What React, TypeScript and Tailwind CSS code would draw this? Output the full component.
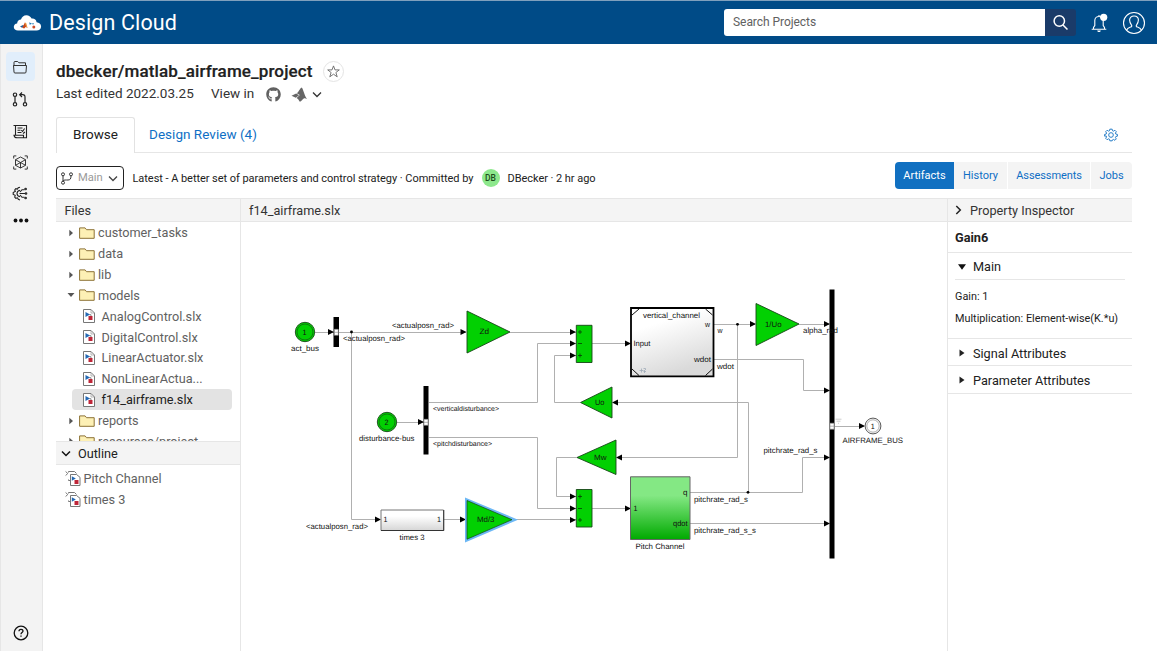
import React from "react";
import { FaGithub } from "react-icons/fa";

const CHEVRON_DOWN = "M1 1.5 5 5.5 9 1.5";

function Chevron({ className }: { className?: string }) {
  return (
    <svg className={className} width="10" height="7" viewBox="0 0 10 7" fill="none" stroke="currentColor" strokeWidth="1.3">
      <path d={CHEVRON_DOWN} />
    </svg>
  );
}

function Header() {
  return (
    <header className="flex h-[44px] shrink-0 items-center border-t border-[#7fa0bd] bg-[#004b87] pl-[13px] pr-[11px] text-white">
      <svg width="29" height="18" viewBox="0 0 29 18" className="mr-[7px]">
        <path d="M5 16.5C2.6 16.5.8 15 .8 13s1.400-3.300 3.300-3.500C4.300 7 6 5.600 8 5.500 8.800 3 10.800 1.300 13.400 1.300c2.400 0 4.300 1.300 5.200 3.300 2.500-.4 4.600 1 5 3.600 2.500.2 4.500 1.800 4.500 4.200 0 2.500-2 4.100-4.600 4.100z" fill="#fff" />
        <path d="m7 12.500 3-1.500 1.500 1.200L9 13.700z" fill="#23629b" />
        <path d="m9.300 13.700 2.600-5.300 1 .8 1.600 4.600-1.800-.8-1.500 1.500z" fill="#c9471c" />
        <path d="m11.900 8.400 1 .8 1.600 4.600-1.500-1z" fill="#f1a33a" />
        <path d="m16.200 8.300 2.800 1.500-2.300 1z" fill="#1c78b8" />
        <circle cx="20" cy="9.800" r=".8" fill="#2b83b8" />
        <circle cx="20.800" cy="13" r="1.500" fill="#cd4b27" />
      </svg>
      <span className="text-[21.500px] leading-none tracking-[0.12px]">Design Cloud</span>
      <div className="ml-auto flex h-[27px] w-[352px] overflow-hidden rounded-[3px]">
        <div className="flex flex-1 items-center bg-white pb-px pl-[9px] text-[12px] text-[#616161]">
          <span className="tracking-[-0.05px]">Search Projects</span>
        </div>
        <div className="flex w-[31px] items-center justify-center bg-[#1a3b69]">
          <svg width="17" height="17" viewBox="0 0 17 17" fill="none" stroke="#fff" strokeWidth="1.5">
            <circle cx="7.300" cy="7" r="5.200" />
            <path d="m11 11 4.500 4.500" />
          </svg>
        </div>
      </div>
      <svg className="ml-[15px]" width="17" height="20" viewBox="0 0 17 20" fill="none" stroke="#fff" strokeWidth="1.100">
        <path d="M.7 16.200h14.600M2.500 16V14.500l1.300-2V7.500c0-2.500 1.700-4 4.200-4s4.200 1.500 4.200 4v5l1.300 2V16M8 3.500V2" />
        <path d="M6.200 17.500h3.600c-.2 1-.9 1.500-1.800 1.500s-1.600-.5-1.800-1.500z" fill="#fff" stroke="none" />
        <circle cx="12.700" cy="4.300" r="3.600" fill="#fff" stroke="none" />
      </svg>
      <svg className="ml-[14px]" width="24" height="24" viewBox="0 0 24 24" fill="none" stroke="#fff" strokeWidth="1.100">
        <circle cx="12" cy="12" r="10.500" />
        <path d="M4.500 19.200c1-2.300 2.500-2.600 4.500-3.300.9-.3 1-1 .5-1.800-1.100-1.400-1.900-3-1.900-5 0-2.600 1.900-4.100 4.400-4.100s4.400 1.500 4.400 4.100c0 2-.8 3.600-1.900 5-.5.8-.4 1.500.5 1.800 2 .7 3.500 1 4.500 3.300" />
      </svg>
    </header>
  );
}

function Sidebar() {
  return (
    <nav className="flex w-[43px] shrink-0 flex-col items-center border-x border-[#e6e6e6] bg-[#f3f3f3] pr-[3px] pt-[8px] text-[#222]">
      <div className="flex h-[29px] w-[29px] items-center justify-center rounded-[4px] bg-[#e1eefb]">
        <svg className="mt-px" width="14" height="13" viewBox="0 0 14 13" fill="none" stroke="#333" strokeWidth="1">
          <path d="M1 5V1.500q0-1 1-1h2.700l1.200 1.300h6.600V5M.5 4.500h13l-.5 6.500q0 1-1 1H2q-1 0-1-1z" />
        </svg>
      </div>
      <svg className="mt-[11px]" width="16" height="15" viewBox="0 0 16 15" fill="none" stroke="currentColor" strokeWidth="1.200">
        <circle cx="3" cy="2.700" r="1.700" />
        <circle cx="3" cy="12.300" r="1.700" />
        <circle cx="13" cy="12.300" r="1.700" />
        <path d="M3 4.500v6M13 10.500V5q0-2.300-2.300-2.300H8M10 .5 7.700 2.700 10 5" />
      </svg>
      <svg className="mt-[17px]" width="15" height="15" viewBox="0 0 15 15" fill="none" stroke="currentColor" strokeWidth="1.100">
        <path d="M.5 1.500h13v12.300H4q-2.500 0-3-2.500h9.500v2M2.500 1.500v9.800M4.500 4h5M4.500 6.200h3M4.500 8.500h4M8.300 6.200l1.300 1.300 2-3M10 9.500l2-1.500" />
      </svg>
      <svg className="mt-[16px]" width="15" height="15" viewBox="0 0 15 15" fill="none" stroke="currentColor" strokeWidth=".9">
        <path d="m7.500 2 5 2.700v5.600l-5 2.700-5-2.700V4.700zM2.500 4.700l5 2.800 5-2.800M7.500 7.500V13M2.500 10.300l5-2.800 5 2.800" />
        <path d="M.7 3.500V.9h2.600M11.700.9h2.600v2.600M.7 11.500v2.600h2.600M11.700 14.100h2.600v-2.600" />
      </svg>
      <svg className="mt-[16px]" width="16" height="15" viewBox="0 0 16 15" fill="none" stroke="currentColor" strokeWidth="1.100">
        <path d="M8 1.200 6.200 1.800 5.500 3 3.800 2.600 2.700 4l.7 1.300L1.200 6.500v2l2 .8L2.700 11l1.200 1.300 1.600-.5.8 1.500 1.700.6M8 4.300C6.200 4.700 5 5.800 5 7.500s1.200 2.800 3 3.200" />
        <path d="M7.500 7.500H13M8 6l2-2.300h2.500M8 9l2 2.300h2.500" />
        <circle cx="14" cy="7.500" r=".8" />
        <circle cx="13.600" cy="3" r=".8" />
        <circle cx="13.600" cy="12" r=".8" />
      </svg>
      <svg className="mt-[17px] ml-[2px]" width="16" height="5" viewBox="0 0 16 5" fill="#111">
        <circle cx="2.500" cy="2.500" r="1.900" />
        <circle cx="8" cy="2.500" r="1.900" />
        <circle cx="13.500" cy="2.500" r="1.900" />
      </svg>
      <svg className="mt-auto mb-[10px] ml-[2px]" width="16" height="16" viewBox="0 0 16 16" fill="none" stroke="#111" strokeWidth="1.300">
        <circle cx="8" cy="8" r="6.800" />
        <path d="M6 6.300c0-1.200.8-2 2-2s2 .7 2 1.800c0 1.500-2 1.500-2 3.100M8 10.400v1.400" />
      </svg>
    </nav>
  );
}

function TitleBlock() {
  return (
    <div className="flex h-[73px] flex-col pl-[13px] pt-[16px]">
      <div className="flex h-[22px] items-center">
        <h1 className="w-[257px] whitespace-nowrap text-[17px] font-medium leading-none text-[#212121] tracking-[0.12px] [-webkit-text-stroke:0.200px_#212121]">dbecker/matlab_airframe_project</h1>
        <span className="ml-[10px] flex h-[21px] w-[21px] items-center justify-center rounded-full border border-[#e4e4e4]">
          <svg width="13" height="13" viewBox="0 0 13 13" fill="none" stroke="#666" strokeWidth=".9">
            <path d="m6.500.9 1.500 4h4.300L8.900 7.500l1.300 4.300-3.700-2.600-3.700 2.600 1.300-4.300L.7 4.900H5z" />
          </svg>
        </span>
      </div>
      <div className="flex h-[24px] items-center text-[13.500px] text-[#333]">
        <span className="w-[155px] whitespace-nowrap pb-[2px]">Last edited 2022.03.25</span>
        <span className="w-[55px] whitespace-nowrap pb-[2px]">View in</span>
        <FaGithub size={15} color="#616161" />
        <svg className="ml-[10px]" width="17" height="15" viewBox="0 0 17 15" fill="#666">
          <path d="m.5 8.800 4.700-2.300 2.800 1.700-3.200 2.600z" fill="#666" />
          <path d="M5.800 6.200C7.600 5.500 8.800 1.300 10.700.6c1.700 1.500 2.600 8 5.300 11.500-2-1.200-3.400-1-4.800.9-.8 1-1.700 1.900-2.700 1.500-.6-1.500-1.400-2.700-2.900-3.500L8.800 8z" />
        </svg>
        <Chevron className="ml-[4px]" />
      </div>
    </div>
  );
}

function Tabs() {
  return (
    <div className="ml-[13px] mr-[25px] flex h-[36px] text-[13.500px]">
      <div className="flex w-[79px] items-center justify-center rounded-t-[3px] border border-b-0 border-[#e2e2e2] pb-[2px] text-[#212121]">Browse</div>
      <div className="flex flex-1 items-center border-b border-[#e6e6e6] pl-[14px] text-[#0f6fc5]">
        <span className="tracking-[0.03px]">Design Review (4)</span>
        <svg className="ml-auto mr-[14px]" width="14" height="14" viewBox="0 0 24 24" fill="none" stroke="#1a76c4" strokeWidth="1.600" strokeLinejoin="round">
          <circle cx="12" cy="12" r="4" />
          <path d="M10 2h4l.6 2.700 1.700.7 2.400-1.500 2.400 2.400-1.500 2.400.7 1.700L23 11v3l-2.700.6-.7 1.700 1.500 2.400-2.400 2.400-2.400-1.500-1.700.7L14 22h-4l-.6-2.700-1.700-.7-2.400 1.500-2.400-2.400 1.500-2.400-.7-1.700L1 14v-3l2.700-.6.7-1.700-1.500-2.400 2.400-2.400 2.400 1.500 1.700-.7z" />
        </svg>
      </div>
    </div>
  );
}

function Toolbar() {
  return (
    <div className="ml-[13px] mr-[25px] flex h-[45px] items-center pt-[5px] text-[11px] text-[#212121]">
      <button className="flex h-[24px] w-[68px] shrink-0 items-center rounded-[4px] border border-[#222] pl-[4px] text-[#9a9a9a]">
        <svg className="shrink-0" width="12" height="13" viewBox="0 0 12 13" fill="none" stroke="#333" strokeWidth="1">
          <circle cx="2" cy="2.300" r="1.500" />
          <circle cx="2" cy="10.700" r="1.500" />
          <circle cx="10" cy="2.300" r="1.500" />
          <path d="M2 4v5M10 4c0 3-1 4-3 4H5.500C3.500 8 2.200 8 2 9.500" />
        </svg>
        <span className="ml-[5px] w-[30px] pt-px text-left text-[11.200px]">Main</span>
        <Chevron className="shrink-0 text-[#444]" />
      </button>
      <span className="ml-[8.500px] w-[349px] shrink-0 whitespace-nowrap pt-[2px] tracking-[-0.05px]">Latest - A better set of parameters and control strategy · Committed by</span>
      <span className="flex h-[18px] w-[18px] items-center justify-center rounded-full bg-[#8de88c] text-[8.500px] font-medium text-[#1d4d1d]">DB</span>
      <span className="ml-[8px] whitespace-nowrap pt-[2px] tracking-[-0.05px]">DBecker · 2 hr ago</span>
      <div className="mb-[5px] ml-auto flex h-[27px] overflow-hidden rounded-[4px] text-[#0f6fc5]">
        <span className="flex w-[59px] items-center justify-center bg-[#1170c1] pt-px text-white">Artifacts</span>
        <span className="flex w-[53px] items-center justify-center bg-[#f4f4f4] pt-px">History</span>
        <span className="ml-px flex w-[82px] items-center justify-center bg-[#f4f4f4] pt-px tracking-[-0.1px]">Assessments</span>
        <span className="ml-px flex w-[41px] items-center justify-center bg-[#f4f4f4] pt-px">Jobs</span>
      </div>
    </div>
  );
}

function Folder() {
  return (
    <svg width="16" height="12" viewBox="0 0 16 12" fill="#fdf0b5" stroke="#8d7236" strokeWidth="1">
      <path d="M.6 11.300V.9h5.500l1.400 1.800h7.700v8.600z" />
    </svg>
  );
}

function ModelIcon({ className }: { className?: string }) {
  return (
    <svg className={className} width="12" height="14" viewBox="0 0 12 14">
      <path d="M.5.500h7.500l3.500 3.500v9.500H.5z" fill="#fff" stroke="#777" />
      <path d="M8 .5V4h3.500" fill="none" stroke="#999" strokeWidth=".7" />
      <path d="M2.500 3 7 5.500 2.500 8z" fill="#2368b4" />
      <path d="M5.500 7h4v4h-4z" fill="#bf2638" />
      <path d="M6.500 5.700h1.500V7" fill="none" stroke="#444" strokeWidth=".6" />
    </svg>
  );
}

function FolderRow({ name, open }: { name: string; open?: boolean }) {
  return (
    <div className="flex h-[20.860px] shrink-0 items-center pl-[11px]">
      <svg width="8" height="8" viewBox="0 0 8 8" fill="#555">
        {open ? <path d="M.5 2h7L4 6z" /> : <path d="m2.300.7 3.700 3.300-3.700 3.300z" />}
      </svg>
      <span className="ml-[4px] mr-[3px]"><Folder /></span>
      <span className="whitespace-nowrap">{name}</span>
    </div>
  );
}

function FileRow({ name, selected }: { name: string; selected?: boolean }) {
  return (
    <div className={selected ? "ml-[16px] mr-[8px] flex h-[20.860px] shrink-0 items-center rounded-[4px] bg-[#e3e3e3] pl-[11px] text-[#212121]" : "flex h-[20.860px] shrink-0 items-center pl-[27px]"}>
      <ModelIcon />
      <span className="ml-[6.500px] whitespace-nowrap">{name}</span>
    </div>
  );
}

function OutlineRow({ name }: { name: string }) {
  return (
    <div className="flex h-[21px] items-center pl-[9px]">
      <svg className="mb-[2px]" width="16" height="16" viewBox="0 0 16 16" fill="none" stroke="#777">
        <path d="m.6 1.500 2.200 2-2.200 2" />
        <path d="M3.500 9.500v1H5M3.500 2.500v-1h6l2 2" />
        <path d="M5.500 4.500h6l3.500 2.800v8.200H5.500z" fill="#fff" />
        <path d="M6.800 6.300 10.800 8.500l-4 2.300z" fill="#2368b4" stroke="none" />
        <path d="M9.500 10h4v4h-4z" fill="#bf2638" stroke="none" />
      </svg>
      <span className="ml-[2.500px]">{name}</span>
    </div>
  );
}

function FilesPanel() {
  return (
    <aside className="flex w-[185px] shrink-0 flex-col border-r border-[#e6e6e6] text-[12.700px] text-[#616161]">
      <div className="flex h-[24px] shrink-0 items-center border-y border-[#e6e6e6] bg-[#f4f4f4] pl-[8.500px] pt-px text-[#333]">Files</div>
      <div className="flex h-[219px] shrink-0 flex-col overflow-hidden pt-[0.400px]">
        <FolderRow name="customer_tasks" />
        <FolderRow name="data" />
        <FolderRow name="lib" />
        <FolderRow name="models" open />
        <FileRow name="AnalogControl.slx" />
        <FileRow name="DigitalControl.slx" />
        <FileRow name="LinearActuator.slx" />
        <FileRow name="NonLinearActua..." />
        <FileRow name="f14_airframe.slx" selected />
        <FolderRow name="reports" />
        <FolderRow name="resources/project" />
      </div>
      <div className="flex h-[24px] shrink-0 items-center border-y border-[#e6e6e6] bg-[#f4f4f4] pl-[5px] text-[#212121]">
        <svg width="10" height="7" viewBox="0 0 10 7" fill="none" stroke="#111" strokeWidth="1.500"><path d={CHEVRON_DOWN} /></svg>
        <span className="ml-[7px] pt-px">Outline</span>
      </div>
      <div className="pt-[3px]">
        <OutlineRow name="Pitch Channel" />
        <OutlineRow name="times 3" />
      </div>
    </aside>
  );
}

type LabelSpec = [text: string, x: number, y: number, width: number, size?: number];

const LABELS: LabelSpec[] = [
  ["act_bus", 291, 351, 28],
  ["<actualposn_rad>", 392, 327.500, 62],
  ["<actualposn_rad>", 343, 341, 62],
  ["<actualposn_rad>", 306, 528.500, 62],
  ["disturbance-bus", 359, 441, 55.500],
  ["<verticaldisturbance>", 433, 411, 66, 7],
  ["<pitchdisturbance>", 433, 446, 59, 7],
  ["times 3", 399.500, 539.500, 25],
  ["Zd", 479.500, 334, 9.500],
  ["Md/3", 477, 522.200, 17.500],
  ["Uo", 595, 405, 9.500],
  ["Mw", 594, 459.500, 12.500],
  ["1/Uo", 765, 326.500, 16.500],
  ["vertical_channel", 643, 318, 57],
  ["w", 705, 327, 5],
  ["w", 717.500, 333.300, 5],
  ["Input", 633.500, 346.300, 17],
  ["wdot", 694, 362, 17],
  ["wdot", 717, 368.500, 17],
  ["alpha_rad", 803, 333.300, 35],
  ["pitchrate_rad_s", 763.500, 453, 54],
  ["pitchrate_rad_s", 694, 501.500, 54],
  ["pitchrate_rad_s_s", 694, 533, 62],
  ["q", 683, 495, 4.500],
  ["qdot", 673, 526, 14.500],
  ["1", 633.500, 510.500, 4],
  ["1", 383.500, 522, 4],
  ["1", 437, 522, 4],
  ["1", 302.500, 334.500, 4],
  ["2", 384.500, 424.500, 4],
  ["1", 870.800, 428.500, 4],
  ["Pitch Channel", 635.500, 549, 49],
  ["AIRFRAME_BUS", 842.500, 443, 60.500],
];

const WIRES = [
  "M315 332.500H334", "M339 332.500H466", "M351.500 332V519.500H380", "M397 422.500H424",
  "M429 402.500H537.500V343.500H576", "M429 437.500H537.500V508.500H576", "M444 519.500H466", "M515 519.500H576",
  "M510 332.500H576", "M580 402.500H554.500V355.500H576", "M577 457.500H556.500V496.500H576",
  "M592 343.500H630", "M592 508.500H630", "M714 324.500H755", "M714 359.500H803.500V390.500H829",
  "M799 324.500H829", "M737.500 324V457.500H617", "M690 492.500H802.500V457.500H829", "M690 523.500H829",
  "M748.500 492V402.500H613", "M835 426.500H864",
];

const ARROWS_RIGHT: [number, number][] = [
  [334, 332], [466.500, 332], [424, 422], [381, 519.500], [466, 519.500], [576, 332], [576, 343.500], [576, 355.500],
  [576, 496.500], [576, 508.500], [576, 520], [631, 343.500], [631, 508.500], [756, 324], [830, 324], [830, 390.500],
  [830, 457.500], [830, 523.500], [865, 426],
];

const ARROWS_LEFT: [number, number][] = [[612, 402.500], [616, 457.500]];
const JOINTS: [number, number][] = [[351.500, 332], [737.500, 324.300], [748, 492.300]];
const SIGNS: [string, number, number][] = [
  ["+", 580, 332], ["-", 580, 343.500], ["+", 580, 355.500], ["+", 580, 496.500], ["-", 580, 508.500], ["+", 580, 520],
];

function Diagram() {
  return (
    <svg className="block shrink-0 [text-rendering:geometricPrecision]" width="706" height="429" viewBox="241 222 706 429" fontFamily="'Liberation Sans', Arial, sans-serif">
      <defs>
        <linearGradient id="gray" x1="0" y1="0" x2=".4" y2="1">
          <stop offset=".3" stopColor="#fff" />
          <stop offset="1" stopColor="#dadada" />
        </linearGradient>
        <linearGradient id="grayDown" x1="0" y1="0" x2="0" y2="1">
          <stop offset=".3" stopColor="#fff" />
          <stop offset="1" stopColor="#d6d6d6" />
        </linearGradient>
        <linearGradient id="green" x1="0" y1="0" x2="0" y2="1">
          <stop offset=".3" stopColor="#84e884" />
          <stop offset="1" stopColor="#00aa00" />
        </linearGradient>
      </defs>
      <g fill="none" stroke="#b0b0b0" strokeWidth="1">
        {WIRES.map((d) => <path key={d} d={d} />)}
      </g>
      <g fill="#000">
        <path d="M333.500 317h5.500v30h-5.500zM423.500 386h5v68.500h-5zM829.500 289.500h5v269h-5z" />
        {ARROWS_RIGHT.map(([x, y]) => <path key={`${x}-${y}`} d={`M${x} ${y}l-6-3v6z`} />)}
        {ARROWS_LEFT.map(([x, y]) => <path key={`${x}-${y}`} d={`M${x} ${y}l6-3v6z`} />)}
        {JOINTS.map(([x, y]) => <circle key={x} cx={x} cy={y} r="1.400" />)}
      </g>
      <g fill="#fff" stroke="#888" strokeWidth=".6">
        <path d="M334.300 329.300h4v6h-4zM334.300 332.300h4M424 419.300h4v6h-4zM424 422.300h4M830 423.200h4v6h-4zM830 426.200h4" />
      </g>
      <g fill="#02d002" stroke="#174517" strokeWidth=".9">
        {[[305, 332], [387, 422]].map(([cx, cy]) => (
          <g key={cx}>
            <circle cx={cx} cy={cy} r="9.700" />
            <circle cx={cx} cy={cy} r="8" strokeWidth=".6" />
          </g>
        ))}
        <path d="M467 311v42l43-21zM756 303.500v42l43-21.500zM612 387v31l-31.500-15.500zM616 440v34.500l-39-17z" />
        <path d="M576.300 325.300h15.700v37.200h-15.700zM576.300 489.500h15.700V527h-15.700z" />
        <path d="M466 499v42l49.500-21.300z" fill="#6db8f5" stroke="#6db8f5" strokeWidth="2" />
        <path d="M467 500.500v38.700l45-19.500z" strokeWidth=".7" />
      </g>
      <path d="M630.500 476.800h59.500v62.700h-59.500z" fill="url(#green)" stroke="#666" />
      <path d="M381 510h62.500v20.500H381z" fill="url(#grayDown)" stroke="#777" />
      <path d="M381 530.500h62.800V510" fill="none" stroke="#333" />
      <path d="M631 308h82.500v68.300H631z" fill="url(#gray)" stroke="#000" strokeWidth="1.800" />
      <path d="M632 315l7-6M705.500 309l7 6M632 369l7 6.500M705.500 375.500l7-6.500" stroke="#111" strokeWidth="1" />
      <g fill="none" stroke="#a0abb8" strokeWidth=".8">
        <path d="M639.500 370.500h4M641.500 368.500v4M643.500 371.500h2.500M644.500 370v3M643.500 368.500h2v1.500" />
        <path d="M835.500 419.200h6M836.500 421.200h4M838 423.300h1" stroke="#c2c2c2" />
      </g>
      <circle cx="873" cy="426" r="7.900" fill="#fff" stroke="#444" strokeWidth=".9" />
      <circle cx="873" cy="426" r="6.200" fill="#fff" stroke="#777" strokeWidth=".6" />
      <g stroke="#063f06" strokeWidth=".8">
        {SIGNS.map(([sign, x, y]) => <path key={y} d={sign === "+" ? `M${x - 2} ${y}h4M${x} ${y - 2}v4` : `M${x - 2} ${y}h4`} />)}
      </g>
      <g fill="#111">
        {LABELS.map(([text, x, y, width, size = 7.800]) => (
          <text key={`${text}-${x}-${y}`} x={x} y={y} fontSize={size} textLength={width} lengthAdjust="spacingAndGlyphs">{text}</text>
        ))}
      </g>
    </svg>
  );
}

function Section({ name }: { name: string }) {
  return (
    <div className="flex h-[27.300px] items-center border-b border-[#e6e6e6] pl-[10px] pt-[2px]">
      <svg width="8" height="8" viewBox="0 0 8 8" fill="#222"><path d="m1.500.5 5 3.500-5 3.500z" /></svg>
      <span className="ml-[7px]">{name}</span>
    </div>
  );
}

function Inspector() {
  return (
    <aside className="flex flex-1 flex-col border-l border-[#e6e6e6] text-[12.700px] text-[#212121]">
      <div className="flex h-[24px] items-center border-y border-[#e6e6e6] bg-[#f4f4f4] pl-[7px] text-[#333]">
        <svg width="7" height="10" viewBox="0 0 7 10" fill="none" stroke="#222" strokeWidth="1.500"><path d="m1.300 1 4 4-4 4" /></svg>
        <span className="ml-[8px] pt-px">Property Inspector</span>
      </div>
      <div className="flex h-[31px] items-center border-b border-[#e6e6e6] pl-[7px] pt-[2px] font-bold">Gain6</div>
      <div className="ml-[7px] mr-[7px] flex h-[27px] items-center border-b border-[#e6e6e6] pl-[3px] pt-[2px]">
        <svg width="8" height="8" viewBox="0 0 8 8" fill="#111"><path d="M0 1.300h8L4 6.800z" /></svg>
        <span className="ml-[7px]">Main</span>
      </div>
      <div className="flex h-[59px] flex-col border-b border-[#e6e6e6] pl-[7px] pt-[5.500px] text-[10.850px] leading-[22px]">
        <span>Gain: 1</span>
        <span className="whitespace-nowrap">Multiplication: Element-wise(K.*u)</span>
      </div>
      <Section name="Signal Attributes" />
      <Section name="Parameter Attributes" />
    </aside>
  );
}

export default function App() {
  return (
    <div className="flex h-[651px] w-[1157px] flex-col overflow-hidden bg-white font-['Roboto',sans-serif]">
      <Header />
      <div className="flex min-h-0 flex-1">
        <Sidebar />
        <main className="flex min-w-0 flex-1 flex-col">
          <TitleBlock />
          <Tabs />
          <Toolbar />
          <div className="ml-[13px] mr-[25px] flex min-h-0 flex-1">
            <FilesPanel />
            <section className="flex w-[706px] shrink-0 flex-col">
              <div className="flex h-[24px] shrink-0 items-center border-y border-[#e6e6e6] bg-[#f4f4f4] pl-[8px] pt-px text-[12.700px] text-[#333]">f14_airframe.slx</div>
              <Diagram />
            </section>
            <Inspector />
          </div>
        </main>
      </div>
    </div>
  );
}
